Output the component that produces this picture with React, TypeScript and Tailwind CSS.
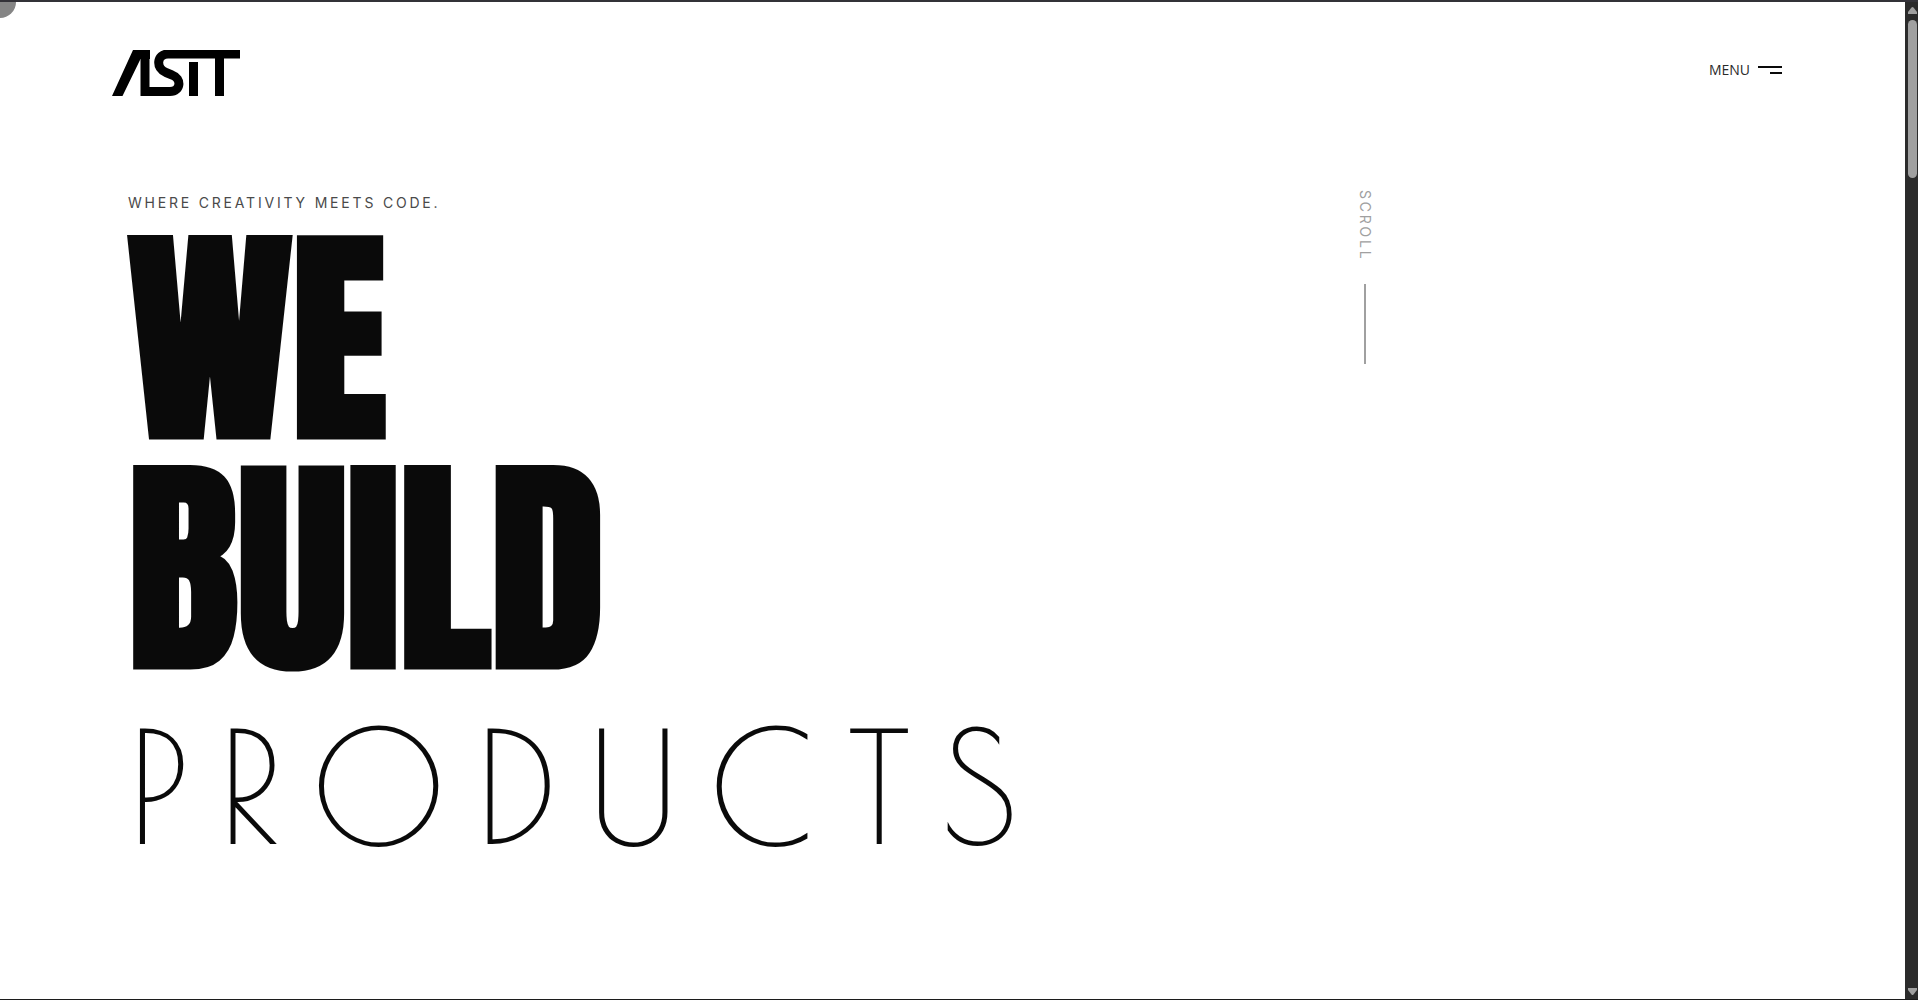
function Logo() {
  return (
    <svg
      viewBox="0 0 128 46"
      className="h-[46px] w-32"
      fill="none"
      stroke="#000"
      strokeWidth="9"
      role="img"
      aria-label="ASIT"
    >
      <path d="M21 0H38V9H28.5L10.5 46H0Z" fill="#000" stroke="none" />
      <path d="M33 0V41.5H58C69 41.5 70 28.5 60 25L54 22.5C43.5 18.5 44.5 4 56 4H128" />
      <path d="M81.5 12V46M107.5 4V46" />
    </svg>
  );
}

function Header() {
  return (
    <header className="flex items-start justify-between pt-12 pr-[123px] pl-28">
      <a href="#home">
        <Logo />
      </a>
      <button
        type="button"
        className="mt-2.5 flex items-center gap-2 font-['Open_Sans',sans-serif] text-sm leading-5 text-[#2a2a2a]"
      >
        MENU
        <span className="flex flex-col items-end gap-1">
          <span className="h-0.5 w-6 bg-[#0a0a0a]" />
          <span className="h-0.5 w-3 bg-[#0a0a0a]" />
        </span>
      </button>
    </header>
  );
}

function ScrollHint() {
  return (
    <div className="flex flex-col items-center gap-[22px] text-[#a0a0a0]">
      <span className="font-[Inter,sans-serif] text-sm tracking-[0.2em] [writing-mode:vertical-rl]">
        SCROLL
      </span>
      <span className="h-20 w-0.5 bg-[#a0a0a0]" />
    </div>
  );
}

function Hero() {
  return (
    <section className="flex items-start pt-[94px] pl-32">
      <div className="w-[1227px]">
        <p className="font-[Inter,sans-serif] text-sm leading-[26px] tracking-[0.2em] text-[#4a4a4a]">
          WHERE CREATIVITY MEETS CODE.
        </p>
        <h1 className="mt-2 text-[#0a0a0a] [font-kerning:none]">
          <span className="block font-[Anton,sans-serif] text-[230px] leading-none font-black">
            WE
            <br />
            BUILD
          </span>
          <span className="mt-[26px] block font-['Poiret_One',sans-serif] text-[153px] leading-none font-thin tracking-[30px]">
            PRODUCTS
          </span>
        </h1>
      </div>
      <ScrollHint />
    </section>
  );
}

// Browser style scrollbar on the right edge
function Scrollbar() {
  return (
    <div className="flex w-[13px] flex-col items-end bg-[#2b2b2b] py-1 pr-px">
      <svg viewBox="0 0 9 7" className="mt-px h-[7px] w-[9px]" fill="#a0a0a0">
        <path d="M3.5 0.5Q4.5-.5 5.5.5L9 5V7H0V5Z" />
      </svg>
      <div className="mt-1.5 h-[158px] w-[9px] rounded-full bg-[#a0a0a0]" />
      <svg viewBox="0 0 9 7" className="mt-auto h-[7px] w-[9px]" fill="#a0a0a0">
        <path d="M3.5 6.5Q4.5 7.5 5.5 6.5L9 2V0H0V2Z" />
      </svg>
    </div>
  );
}

export default function App() {
  return (
    <div className="flex min-h-screen border-t-2 border-b border-t-[#333238] border-b-[#1c1c1c] bg-white">
      <div className="relative flex-1 overflow-hidden">
        {/* Custom cursor */}
        <div className="absolute -top-4 -left-4 size-8 rounded-full bg-[#858585]" />
        <Header />
        <Hero />
      </div>
      <Scrollbar />
    </div>
  );
}
